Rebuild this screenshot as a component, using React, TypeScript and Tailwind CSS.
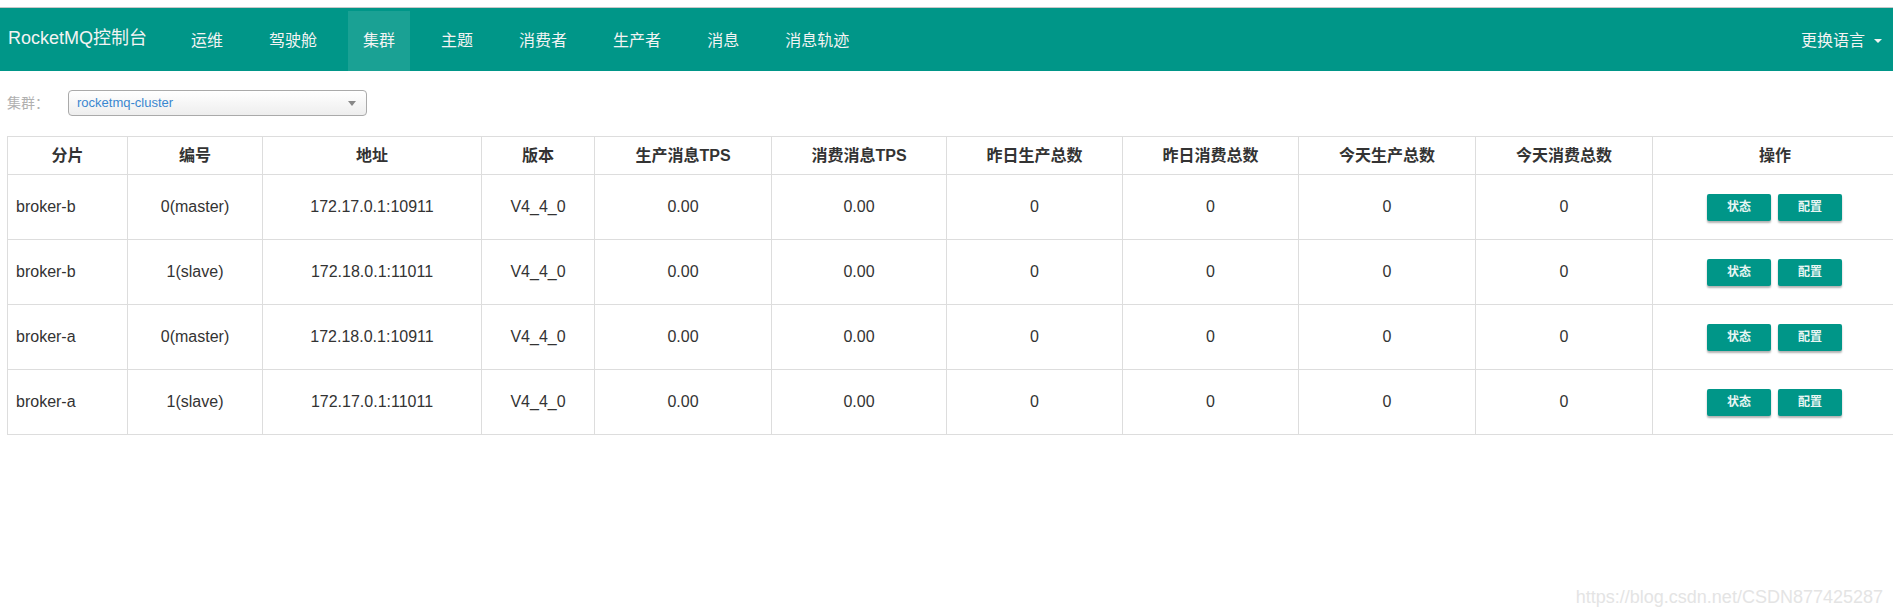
const navItems = ["运维", "驾驶舱", "集群", "主题", "消费者", "生产者", "消息", "消息轨迹"];

const columns = [
  { title: "分片", width: 120 },
  { title: "编号", width: 135 },
  { title: "地址", width: 219 },
  { title: "版本", width: 113 },
  { title: "生产消息TPS", width: 177 },
  { title: "消费消息TPS", width: 175 },
  { title: "昨日生产总数", width: 176 },
  { title: "昨日消费总数", width: 176 },
  { title: "今天生产总数", width: 177 },
  { title: "今天消费总数", width: 177 },
  { title: "操作", width: 245 },
];

const brokers = [
  { name: "broker-b", no: "0(master)", addr: "172.17.0.1:10911" },
  { name: "broker-b", no: "1(slave)", addr: "172.18.0.1:11011" },
  { name: "broker-a", no: "0(master)", addr: "172.18.0.1:10911" },
  { name: "broker-a", no: "1(slave)", addr: "172.17.0.1:11011" },
];

function ActionButton({ label }: { label: string }) {
  return (
    <button className="h-[27px] w-[64px] rounded-[2px] bg-[#009688] text-[12px] font-semibold text-[#e8f5f3] shadow-[0_2px_2px_rgba(0,0,0,0.3)]">
      {label}
    </button>
  );
}

export default function App() {
  return (
    <div
      className="relative h-[615px] w-[1893px] overflow-hidden bg-white text-[#333]"
      style={{ fontFamily: '"Liberation Sans", "Noto Sans CJK SC", sans-serif' }}
    >
      {/* top bar */}
      <div className="mt-[7px] flex h-[64px] border-t border-[#c8c8c8] bg-[#009688] text-[#f3f3f3]">
        <div className="flex items-center pb-[2px] pl-[8px] text-[18px]">RocketMQ控制台</div>
        <ul className="ml-[29px] flex gap-[16px] pt-[3px]">
          {navItems.map((item) => (
            <li
              key={item}
              className={
                "flex items-center px-[15px] text-[16px] " +
                (item === "集群" ? "bg-white/10" : "")
              }
            >
              {item}
            </li>
          ))}
        </ul>
        <div className="ml-auto flex items-center pr-[11px] pt-[3px] text-[16px]">
          更换语言
          <span className="ml-[9px] inline-block h-0 w-0 border-x-[4px] border-t-[4px] border-x-transparent border-t-[#f3f3f3]" />
        </div>
      </div>

      {/* cluster select */}
      <div className="mt-[19px] flex items-center pl-[7px]">
        <span className="w-[61px] text-[14px] text-[#b0b0b0]">集群：</span>
        <div className="flex h-[26px] w-[299px] items-center justify-between rounded-[4px] border border-[#aaa] bg-gradient-to-b from-white to-[#eee] pl-[8px] pr-[10px]">
          <span className="text-[13px] text-[#3a87d0]">rocketmq-cluster</span>
          <span className="inline-block h-0 w-0 border-x-[4px] border-t-[5px] border-x-transparent border-t-[#888]" />
        </div>
      </div>

      {/* broker table */}
      <table
        className="ml-[7px] mt-[20px] table-fixed border-collapse"
        style={{ width: 1890 }}
      >
        <colgroup>
          {columns.map((c) => (
            <col key={c.title} style={{ width: c.width }} />
          ))}
        </colgroup>
        <thead>
          <tr className="h-[38px]">
            {columns.map((c) => (
              <th key={c.title} className="border border-[#ddd] text-center text-[16px] font-bold">
                {c.title}
              </th>
            ))}
          </tr>
        </thead>
        <tbody>
          {brokers.map((b, i) => (
            <tr key={i} className="h-[65px] text-[16px]">
              <td className="border border-[#ddd] pl-[8px]">{b.name}</td>
              <td className="border border-[#ddd] text-center">{b.no}</td>
              <td className="border border-[#ddd] text-center">{b.addr}</td>
              <td className="border border-[#ddd] text-center">V4_4_0</td>
              <td className="border border-[#ddd] text-center">0.00</td>
              <td className="border border-[#ddd] text-center">0.00</td>
              <td className="border border-[#ddd] text-center">0</td>
              <td className="border border-[#ddd] text-center">0</td>
              <td className="border border-[#ddd] text-center">0</td>
              <td className="border border-[#ddd] text-center">0</td>
              <td className="border border-[#ddd] pl-[54px]">
                <div className="flex gap-[7px]">
                  <ActionButton label="状态" />
                  <ActionButton label="配置" />
                </div>
              </td>
            </tr>
          ))}
        </tbody>
      </table>

      <div className="absolute right-[10px] top-[584px] text-[18px] text-[#e4e4e4]">
        https://blog.csdn.net/CSDN877425287
      </div>
    </div>
  );
}
